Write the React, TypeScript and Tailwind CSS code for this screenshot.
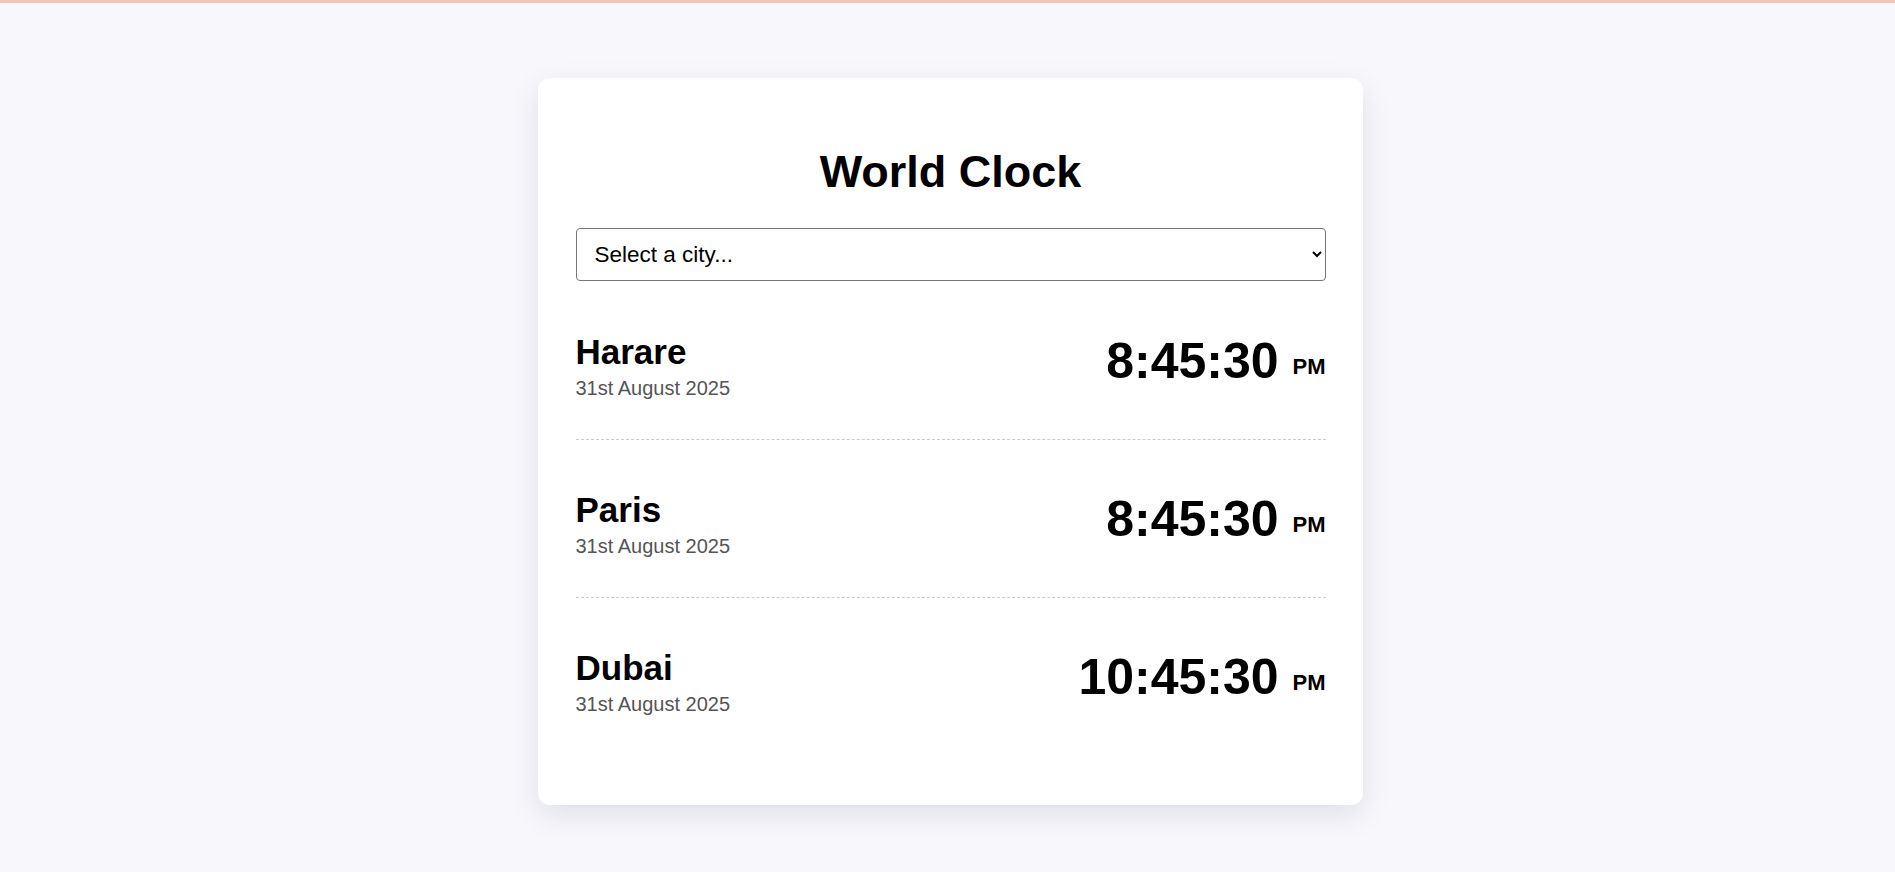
import React from "react";

const cities = [
  { name: "Harare", date: "31st August 2025", time: "8:45:30", ampm: "PM" },
  { name: "Paris", date: "31st August 2025", time: "8:45:30", ampm: "PM" },
  { name: "Dubai", date: "31st August 2025", time: "10:45:30", ampm: "PM" },
];

export default function App() {
  return (
    <div className="min-h-screen bg-[#f7f7fc] font-['Liberation_Sans',Arial,sans-serif] text-black">
      <div className="h-[3px] bg-[#f2c4bc]" />
      <div className="flex justify-center pt-[75px] pl-[5px]">
        <div className="w-[825px] bg-white rounded-xl shadow-[0_10px_30px_rgba(20,20,60,0.1)] pl-[38px] pr-[37px] pt-[68px] pb-[50px]">
          <h1 className="text-[45px] font-bold text-center leading-[normal]">World Clock</h1>
          <select
            className="mt-[30px] block w-full h-[53px] border border-[#767676] rounded-[4px] bg-white pl-[14px] pr-[10px] text-[22.5px] text-black"
            defaultValue=""
          >
            <option value="">Select a city...</option>
            <option value="harare">Harare</option>
            <option value="paris">Paris</option>
            <option value="dubai">Dubai</option>
          </select>
          <div className="mt-[1px]">
            {cities.map((c, i) => (
              <div
                key={c.name}
                className={
                  i < cities.length - 1
                    ? "flex items-start justify-between pt-[50px] pb-[39px] border-b border-dashed border-[#cccccc]"
                    : "flex items-start justify-between pt-[50px] pb-[39px]"
                }
              >
                <div>
                  <div className="text-[35px] font-bold leading-[normal] mb-[5px]">{c.name}</div>
                  <div className="text-[20px] text-[#555555] leading-[normal]">{c.date}</div>
                </div>
                <div className="text-[50px] font-bold leading-[normal] whitespace-nowrap">
                  {c.time}{" "}
                  <span className="text-[22px] align-[4px]">{c.ampm}</span>
                </div>
              </div>
            ))}
          </div>
        </div>
      </div>
    </div>
  );
}
